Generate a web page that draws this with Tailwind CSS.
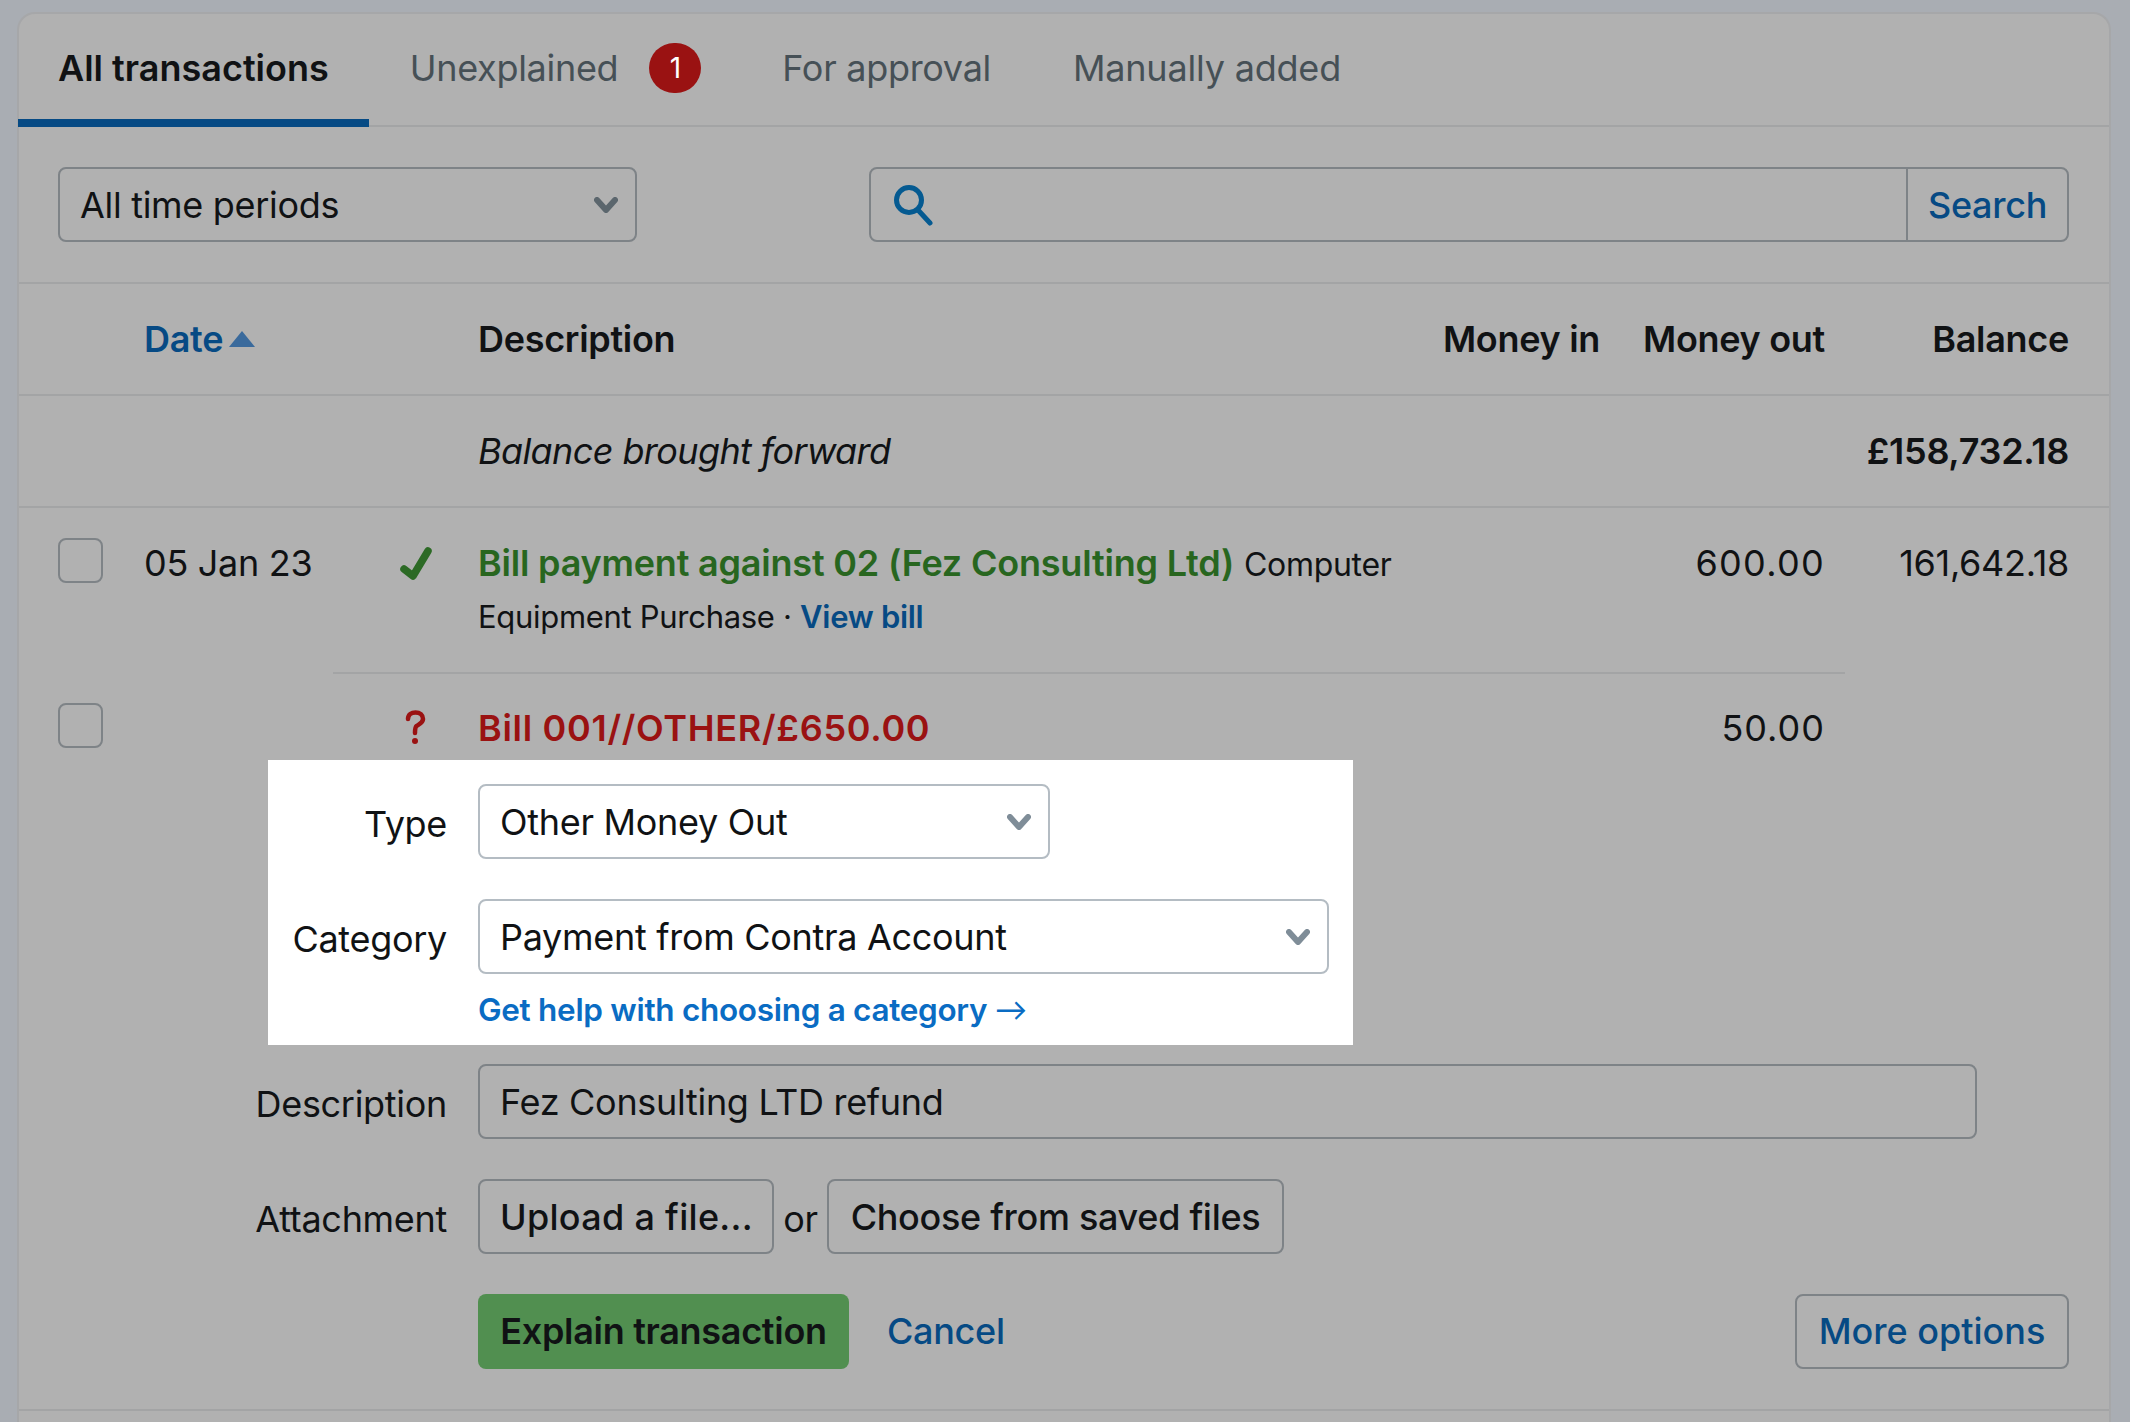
<!DOCTYPE html>
<html lang="en">
<head>
    <meta charset="UTF-8">
    <title>Bank transactions</title>
    <script src="https://cdn.jsdelivr.net/npm/@tailwindcss/browser@4"></script>
</head>
<body class="bg-[#a9adb3] font-['Inter',sans-serif] text-[36px] tracking-[-0.3px] text-[#101214] overflow-hidden">
    <div class="h-[1422px] pt-[12px] pl-[17px] pr-[19px]">
        <div class="h-[1410px] bg-[#b1b1b1] border-2 border-b-0 border-[#a6a7a9] rounded-t-[18px]">

            <!-- tabs -->
            <div class="flex h-[113px] border-b-2 border-[#a3a4a5]">
                <a class="flex items-center -ml-[1px] px-[40px] h-[113px] border-b-[8px] border-[#064a84] pt-[2px] font-semibold tracking-[0px] whitespace-nowrap">All transactions</a>
                <a class="flex items-center pl-[41px] pr-[40px] pb-[4px] text-[#465056]">Unexplained
                    <span class="ml-[31px] flex items-center justify-center w-[52px] h-[50px] rounded-full bg-[#9a1212] text-white text-[28px]">1</span>
                </a>
                <a class="flex items-center px-[41px] pb-[4px] text-[#465056]">For approval</a>
                <a class="flex items-center px-[41px] pb-[4px] text-[#465056] tracking-[-0.2px]">Manually added</a>
            </div>

            <!-- filters -->
            <div class="flex justify-between h-[157px] pt-[40px] pl-[39px] pr-[40px] border-b-2 border-[#a3a4a5]">
                <div class="flex items-center justify-between w-[579px] h-[75px] pl-[20px] pr-[17px] border-2 border-[#7e8387] rounded-[8px]">
                    All time periods
                    <svg class="w-[24px] h-[16px]" viewBox="0 0 24 16" fill="none" stroke="#5b666d" stroke-width="6" stroke-linecap="round" stroke-linejoin="round"><path d="M3 3l9 10 9-10"/></svg>
                </div>
                <div class="flex w-[1200px] h-[75px] border-2 border-[#7e8387] rounded-[8px]">
                    <div class="flex-1 pl-[22px] flex items-center">
                        <svg class="w-[40px] h-[42px]" viewBox="0 0 40 42" fill="none" stroke="#055a91" stroke-width="5" stroke-linecap="round"><circle cx="16" cy="16" r="12.5"/><path d="M25 26l12 13"/></svg>
                    </div>
                    <div class="flex items-center justify-center w-[161px] border-l-2 border-[#7e8387] text-[#064a84] font-medium">Search</div>
                </div>
            </div>

            <!-- table head -->
            <div class="grid grid-cols-[86px_253px_81px_923px_199px_225px_244px] items-center h-[112px] pl-[39px] pr-[40px] border-b-2 border-[#a3a4a5] font-semibold">
                <div></div>
                <div class="flex items-center gap-[6px] text-[#064a84]">Date
                    <svg class="w-[26px] h-[16px]" viewBox="0 0 26 16" fill="#3a6a9c"><path d="M13 0l13 16H0z"/></svg>
                </div>
                <div></div>
                <div>Description</div>
                <div class="text-right">Money in</div>
                <div class="text-right">Money out</div>
                <div class="text-right">Balance</div>
            </div>

            <!-- balance brought forward -->
            <div class="grid grid-cols-[86px_253px_81px_923px_199px_225px_244px] items-center h-[112px] pl-[39px] pr-[40px] border-b-2 border-[#a3a4a5]">
                <div></div>
                <div></div>
                <div></div>
                <div class="italic tracking-[-0.6px]">Balance brought forward</div>
                <div></div>
                <div></div>
                <div class="text-right font-semibold">£158,732.18</div>
            </div>

            <!-- paid bill row -->
            <div class="grid grid-cols-[86px_253px_81px_923px_199px_225px_244px] h-[164px] pt-[30px] pl-[39px] pr-[40px] leading-[52px]">
                <div class="w-[45px] h-[45px] border-2 border-[#7e8387] rounded-[8px]"></div>
                <div class="-mt-[1px]">05 Jan 23</div>
                <div class="pt-[8px] pl-[2px]">
                    <svg class="w-[36px] h-[38px]" viewBox="0 0 36 38" fill="none" stroke="#2c6a25" stroke-width="7.500" stroke-linecap="round" stroke-linejoin="round"><path d="M5 23l9 7L29 5"/></svg>
                </div>
                <div class="-mt-[1px]">
                    <div class="whitespace-nowrap"><span class="font-semibold text-[#28661f] tracking-[-0.2px]">Bill payment against 02 (Fez Consulting Ltd)</span> <span class="text-[32px]">Computer</span></div>
                    <div class="text-[31px]">Equipment Purchase · <a class="font-semibold text-[#064a84]">View bill</a></div>
                </div>
                <div></div>
                <div class="-mt-[1px] text-right tracking-[1.3px]">600.00</div>
                <div class="-mt-[1px] text-right">161,642.18</div>
            </div>
            <div class="ml-[314px] w-[1512px] h-[2px] bg-[#a3a4a5]"></div>

            <!-- unexplained row -->
            <div class="grid grid-cols-[86px_253px_81px_923px_199px_225px_244px] h-[86px] pt-[29px] pl-[39px] pr-[40px] leading-[52px]">
                <div class="w-[45px] h-[45px] border-2 border-[#7e8387] rounded-[8px]"></div>
                <div></div>
                <div class="pl-[8px] pt-[7px]">
                    <svg class="w-[21px] h-[35px]" viewBox="0 0 21 35" fill="none" stroke="#9a1212" stroke-width="4.500" stroke-linecap="round"><path d="M3 9C3 4.500 6.500 2.500 10.500 2.500C15 2.500 18 5 18 9C18 13 14 14 11.500 16C10 17.300 10 19 10 23"/><circle cx="10" cy="31" r="3" fill="#9a1212" stroke="none"/></svg>
                </div>
                <div class="-mt-[1px] font-semibold text-[#9a1212] tracking-[0.7px]">Bill 001//OTHER/£650.00</div>
                <div></div>
                <div class="-mt-[1px] text-right tracking-[1px]">50.00</div>
                <div></div>
            </div>

            <!-- highlighted fields -->
            <div class="ml-[249px] w-[1085px] h-[285px] pt-[24px] bg-white">
                <div class="flex items-center h-[75px]">
                    <div class="w-[179px] pt-[4px] text-right">Type</div>
                    <div class="flex items-center justify-between ml-[31px] w-[572px] h-[75px] pl-[20px] pr-[17px] border-2 border-[#b4bcc3] rounded-[8px]">
                        Other Money Out
                        <svg class="w-[24px] h-[16px]" viewBox="0 0 24 16" fill="none" stroke="#7f8d98" stroke-width="6" stroke-linecap="round" stroke-linejoin="round"><path d="M3 3l9 10 9-10"/></svg>
                    </div>
                </div>
                <div class="flex items-center h-[75px] mt-[40px]">
                    <div class="w-[179px] pt-[4px] text-right">Category</div>
                    <div class="flex items-center justify-between ml-[31px] w-[851px] h-[75px] pl-[20px] pr-[17px] border-2 border-[#b4bcc3] rounded-[8px]">
                        Payment from Contra Account
                        <svg class="w-[24px] h-[16px]" viewBox="0 0 24 16" fill="none" stroke="#7f8d98" stroke-width="6" stroke-linecap="round" stroke-linejoin="round"><path d="M3 3l9 10 9-10"/></svg>
                    </div>
                </div>
                <div class="ml-[210px] mt-[14px] h-[44px] leading-[44px] text-[31.500px] font-semibold text-[#0a6cc3] whitespace-nowrap">Get help with choosing a category <span class="font-['Lato',sans-serif] font-normal text-[32px] leading-none">→</span></div>
            </div>

            <!-- remaining fields -->
            <div class="ml-[229px] mt-[19px] flex items-center h-[75px]">
                <div class="w-[199px] pt-[4px] text-right">Description</div>
                <div class="flex items-center ml-[31px] w-[1499px] h-[75px] pl-[20px] pt-[1px] border-2 border-[#7e8387] rounded-[8px]">Fez Consulting LTD refund</div>
            </div>
            <div class="ml-[229px] mt-[40px] flex items-center h-[75px]">
                <div class="w-[199px] pt-[4px] text-right whitespace-nowrap">Attachment</div>
                <div class="flex items-center pl-[20px] ml-[31px] w-[296px] h-[75px] border-2 border-[#7e8387] rounded-[8px] font-medium tracking-[0.3px] whitespace-nowrap">Upload a file...</div>
                <div class="w-[53px] pt-[4px] text-center">or</div>
                <div class="flex items-center justify-center w-[457px] h-[75px] border-2 border-[#7e8387] rounded-[8px] font-medium whitespace-nowrap">Choose from saved files</div>
            </div>
            <div class="mt-[40px] flex items-center h-[75px] pl-[459px] pr-[40px] pb-[1px]">
                <div class="flex items-center justify-center w-[371px] h-[75px] rounded-[8px] bg-[#518f50] font-semibold">Explain transaction</div>
                <a class="ml-[38px] text-[#064a84] font-medium">Cancel</a>
                <div class="ml-auto flex items-center justify-center w-[274px] h-[75px] border-2 border-[#7e8387] rounded-[8px] text-[#064a84] font-medium tracking-[0px]">More options</div>
            </div>
            <div class="mt-[40px] h-[2px] bg-[#a3a4a5]"></div>
        </div>
    </div>
</body>
</html>
